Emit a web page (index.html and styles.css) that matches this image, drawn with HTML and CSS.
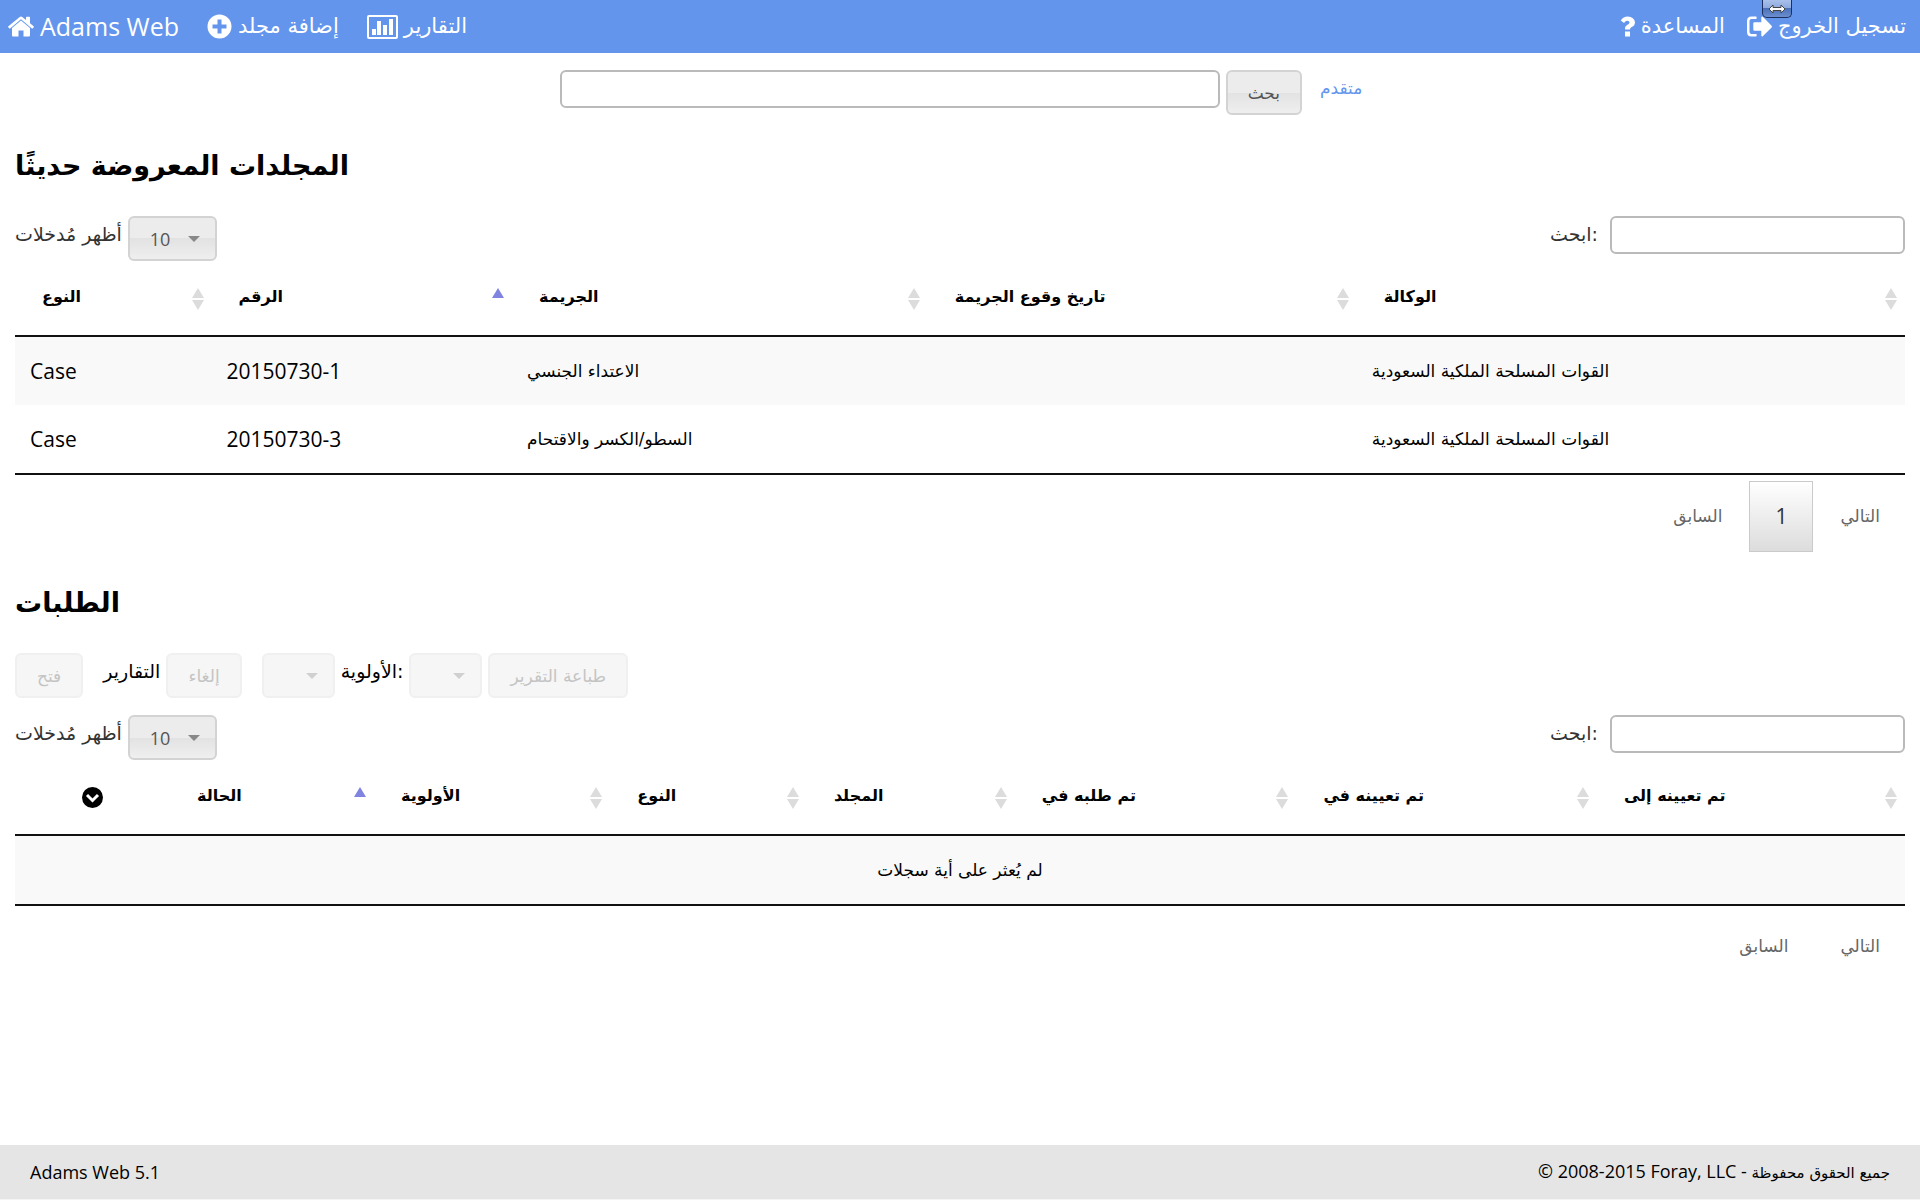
FILE: index.html
```html
<!DOCTYPE html>
<html lang="ar" dir="ltr">
<head>
    <meta charset="UTF-8">
    <meta name="viewport" content="width=device-width, initial-scale=1.0">
    <title>Adams Web</title>
    <link rel="stylesheet" href="styles.css">
</head>
<body>

<header class="topbar">
    <nav class="nav">
        <a href="#" class="brand">
            <svg class="icon" width="26" height="21" viewBox="0 0 26 21"><path fill="currentColor" d="M13 4.500L4 12v7.500q0 1 1 1h5.500v-6h5v6H21q1 0 1-1V12zM25.600 10.300L22 7.300V1.500q0-.7-.7-.7h-2.600q-.7 0-.7.7v2.600L14.300 1q-1.300-1-2.600 0L.4 10.300q-.5.500-.1 1l.8 1q.4.400 1 .100L13 3.300l10.900 9.100q.6.300 1-.1l.8-1q.4-.5-.1-1z"/></svg>
            <span>Adams Web</span>
        </a>
        <a href="#">
            <svg class="icon" width="25" height="25" viewBox="0 0 25 25"><path fill="currentColor" fill-rule="evenodd" d="M12.500.5a12 12 0 1 0 0 24a12 12 0 1 0 0-24zM10.500 5.500h4v5h5v4h-5v5h-4v-5h-5v-4h5z"/></svg>
            <span class="ar">إضافة مجلد</span>
        </a>
        <a href="#">
            <svg class="icon" width="31" height="24" viewBox="0 0 31 24"><path fill="currentColor" fill-rule="evenodd" d="M2 0h27q2 0 2 2v20q0 2-2 2H2q-2 0-2-2V2q0-2 2-2zM2 2v20h27V2zM5 14h4v6H5zM10 6h4v14h-4zM16 10h4v10h-4zM22 4h4v16h-4z"/></svg>
            <span class="ar">التقارير</span>
        </a>
    </nav>
    <nav class="nav account">
        <a href="#">
            <svg class="icon" width="15" height="21" viewBox="0 0 15 21"><path fill="currentColor" d="M5 15.500h5V20.500H5zM5 13.500v-1.500q0-2 2.500-3.300q2-1 2-2.300q0-1.700-2.200-1.700q-1.800 0-3.300 2.300L.8 4.600Q3.200.5 7.800.5q3 0 5 1.700T15 6.200q0 3.300-3.300 4.900q-1.700.9-1.700 2.400z"/></svg>
            <span class="ar">المساعدة</span>
        </a>
        <a href="#">
            <svg class="icon" width="25" height="21" viewBox="0 0 25 21"><path fill="currentColor" d="M9 .5H4.500Q0 .5 0 5v11q0 4.500 4.500 4.500H9q.7 0 .7-1.300T9 18H4.500Q2.500 18 2.500 16V5q0-2 2-2H9q.7 0 .7-1.200T9 .5zM24.600 9.800L15.800.8q-1-.7-1.500.5v5H7.500q-1.200 0-1.200 1.200v6q0 1.200 1.200 1.200h6.800v5q.5 1.200 1.500.5l8.800-8.600q.6-.9 0-1.800z"/></svg>
            <span class="ar">تسجيل الخروج</span>
        </a>
    </nav>
    <button class="resize-tab" type="button" aria-label="Resize">
        <svg width="18" height="10" viewBox="0 0 18 10"><path fill="#fff" stroke="#444" d="M1 5l4-4v2.500h8V1l4 4-4 4V6.500H5V9z"/></svg>
    </button>
</header>

<main>
    <form class="search">
        <input type="text" class="field search-field" aria-label="بحث">
        <button type="button" class="btn ar">بحث</button>
        <a href="#" class="advanced ar">متقدم</a>
    </form>

    <section>
        <h2 class="ar">المجلدات المعروضة حديثًا</h2>
        <div class="table-tools">
            <div class="length">
                <label for="length1" class="ar">أظهر مُدخلات</label>
                <div class="select"><select id="length1"><option>10</option><option>25</option></select></div>
            </div>
            <div class="filter">
                <label for="filter1" class="ar">ابحث:</label>
                <input type="text" class="field" id="filter1">
            </div>
        </div>
        <table class="folders">
            <colgroup><col class="f-type"><col class="f-number"><col class="f-offense"><col class="f-date"><col></colgroup>
            <thead>
                <tr>
                    <th class="ar sort">النوع</th>
                    <th class="ar sort asc">الرقم</th>
                    <th class="ar sort">الجريمة</th>
                    <th class="ar sort">تاريخ وقوع الجريمة</th>
                    <th class="ar sort">الوكالة</th>
                </tr>
            </thead>
            <tbody>
                <tr>
                    <td>Case</td>
                    <td>20150730-1</td>
                    <td class="ar">الاعتداء الجنسي</td>
                    <td></td>
                    <td class="ar">القوات المسلحة الملكية السعودية</td>
                </tr>
                <tr>
                    <td>Case</td>
                    <td>20150730-3</td>
                    <td class="ar">السطو/الكسر والاقتحام</td>
                    <td></td>
                    <td class="ar">القوات المسلحة الملكية السعودية</td>
                </tr>
            </tbody>
        </table>
        <div class="paging">
            <a href="#" class="ar">السابق</a>
            <a href="#" class="current">1</a>
            <a href="#" class="ar">التالي</a>
        </div>
    </section>

    <section>
        <h2 class="ar">الطلبات</h2>
        <div class="actions">
            <button type="button" class="btn ar" disabled>فتح</button>
            <label for="reports" class="ar reports">التقارير</label>
            <button type="button" class="btn ar" disabled>إلغاء</button>
            <div class="select empty status"><select id="reports" disabled><option></option></select></div>
            <label for="priority" class="ar">الأولوية:</label>
            <div class="select empty"><select id="priority" disabled><option></option></select></div>
            <button type="button" class="btn ar" disabled>طباعة التقرير</button>
        </div>
        <div class="table-tools">
            <div class="length">
                <label for="length2" class="ar">أظهر مُدخلات</label>
                <div class="select"><select id="length2"><option>10</option><option>25</option></select></div>
            </div>
            <div class="filter">
                <label for="filter2" class="ar">ابحث:</label>
                <input type="text" class="field" id="filter2">
            </div>
        </div>
        <table class="requests">
            <colgroup><col class="r-toggle"><col class="r-status"><col class="r-priority"><col class="r-type"><col class="r-folder"><col class="r-requested"><col class="r-assigned"><col></colgroup>
            <thead>
                <tr>
                    <th class="toggle">
                        <svg width="21" height="21" viewBox="0 0 21 21"><circle cx="10.500" cy="10.500" r="10.500"/><path fill="none" stroke="#fff" stroke-width="3" d="M5 8l5.500 5.500L16 8"/></svg>
                    </th>
                    <th class="ar sort asc">الحالة</th>
                    <th class="ar sort">الأولوية</th>
                    <th class="ar sort">النوع</th>
                    <th class="ar sort">المجلد</th>
                    <th class="ar sort">تم طلبه في</th>
                    <th class="ar sort">تم تعيينه في</th>
                    <th class="ar sort">تم تعيينه إلى</th>
                </tr>
            </thead>
            <tbody>
                <tr>
                    <td colspan="8" class="ar none">لم يُعثر على أية سجلات</td>
                </tr>
            </tbody>
        </table>
        <div class="paging">
            <a href="#" class="ar">السابق</a>
            <a href="#" class="ar">التالي</a>
        </div>
    </section>
</main>

<footer>
    <span>Adams Web 5.1</span>
    <span>© 2008-2015 Foray, LLC - <span class="ar">جميع الحقوق محفوظة</span></span>
</footer>

</body>
</html>
```

FILE: styles.css
```css
* {
    box-sizing: border-box;
}

body {
    margin: 0;
    min-height: 100vh;
    display: flex;
    flex-direction: column;
    font-family: "Open Sans", "DejaVu Sans", sans-serif;
    font-size: 21px;
    line-height: 25px;
    color: #000;
    background-color: #fff;
}

a {
    text-decoration: none;
}

.ar {
    font-family: "DejaVu Sans", sans-serif;
    font-size: 17px;
}

.topbar {
    position: relative;
    display: flex;
    justify-content: space-between;
    height: 53px;
    padding: 0 14px 0 8px;
    background-color: #6495ed;
}

.nav {
    display: flex;
    align-items: center;
    gap: 28px;
}

.account {
    gap: 22px;
}

.nav a {
    display: flex;
    align-items: center;
    gap: 6px;
    color: #fff;
    font-size: 25px;
}

.nav .ar {
    font-size: 21px;
}

.resize-tab {
    position: absolute;
    top: 0;
    right: 128px;
    width: 30px;
    height: 18px;
    padding: 0;
    line-height: 0;
    border: 1px solid #1d2f5c;
    border-top: none;
    border-radius: 0 0 5px 5px;
    background: linear-gradient(#a9c0ea, #8ba9dd 50%, #4a70b8 50%, #6c8fd0);
}

main {
    flex: 1;
    padding: 17px 15px;
}

.search {
    display: flex;
    justify-content: center;
    align-items: flex-start;
    gap: 6px;
    padding-left: 2px;
}

.field {
    width: 295px;
    height: 38px;
    padding: 4px 8px;
    font: inherit;
    border: 2px solid #bababa;
    border-radius: 6px;
}

.search-field {
    width: 660px;
}

.btn,
.select select {
    height: 45px;
    padding: 0 20px;
    color: #555;
    border: 2px solid #d3d3d3;
    border-radius: 6px;
    background: linear-gradient(#ececec 50%, #e2e2e2 50%, #efefef);
}

.btn:disabled,
.select select:disabled {
    color: #c4c4c4;
    border-color: #f0f0f0;
    background: #f6f6f6;
    opacity: 1;
}

.advanced {
    margin: 6px 0 0 12px;
    color: #6495ed;
}

.select {
    position: relative;
    width: 89px;
}

.select select {
    width: 100%;
    appearance: none;
    font-family: "Open Sans", sans-serif;
    font-size: 18px;
}

.select::after {
    content: "";
    position: absolute;
    top: 20px;
    right: 17px;
    border: 6px solid transparent;
    border-top-color: #888;
    border-bottom: none;
    pointer-events: none;
}

.empty {
    width: 73px;
}

.empty::after {
    border-top-color: #d0d0d0;
}

h2 {
    margin: 0;
    line-height: 101px;
}

h2.ar {
    font-size: 27px;
}

.table-tools,
.length,
.filter,
.actions {
    display: flex;
    align-items: flex-start;
    color: #333;
}

.table-tools {
    justify-content: space-between;
}

.length,
.actions {
    gap: 6px;
}

.filter {
    gap: 12px;
}

label.ar {
    margin-top: 6px;
    font-size: 19px;
}

.actions {
    color: #000;
    margin-bottom: 17px;
}

.actions .reports,
.status {
    margin-left: 14px;
}

table {
    width: 100%;
    table-layout: fixed;
    border-collapse: separate;
    border-spacing: 0;
    border-bottom: 2px solid #111;
}

th {
    height: 76px;
    padding: 0 27px 4px;
    text-align: left;
    border-bottom: 2px solid #111;
}

th.ar {
    font-size: 16px;
}

td {
    height: 68px;
    padding: 0 15px;
}

tbody tr:nth-child(odd) td {
    background-color: #f9f9f9;
}

.sort {
    background: url("data:image/svg+xml,%3Csvg xmlns='http://www.w3.org/2000/svg' width='12' height='22'%3E%3Cpath fill='%23dcdcdc' d='M0 10L6 0l6 10zM0 12l6 10 6-10z'/%3E%3C/svg%3E") no-repeat right 8px top 27px;
}

.asc {
    background-image: url("data:image/svg+xml,%3Csvg xmlns='http://www.w3.org/2000/svg' width='12' height='22'%3E%3Cpath fill='%237f84e0' d='M0 10L6 0l6 10z'/%3E%3C/svg%3E");
}

.toggle,
.none {
    text-align: center;
}

.toggle {
    padding: 0;
}

.toggle svg {
    display: block;
    margin: 0 auto;
}

.f-type { width: 10.4%; }
.f-number { width: 15.9%; }
.f-offense { width: 22%; }
.f-date { width: 22.7%; }

.r-toggle { width: 8.2%; }
.r-status { width: 10.8%; }
.r-priority { width: 12.5%; }
.r-type { width: 10.4%; }
.r-folder { width: 11%; }
.r-requested { width: 14.9%; }
.r-assigned { width: 15.9%; }

.paging {
    display: flex;
    justify-content: flex-end;
    align-items: center;
    gap: 2px;
    padding-top: 6px;
}

.paging a {
    padding: 22px 25px;
    color: #666;
}

.paging .current {
    color: #333;
    border: 1px solid #cacaca;
    background: linear-gradient(#fff, #dcdcdc);
}

footer {
    display: flex;
    justify-content: space-between;
    align-items: center;
    height: 55px;
    padding: 0 30px;
    font-size: 18px;
    background-color: #e5e5e5;
    border-bottom: 1px solid #f4f4f4;
}

footer .ar {
    font-size: 15px;
}
```
